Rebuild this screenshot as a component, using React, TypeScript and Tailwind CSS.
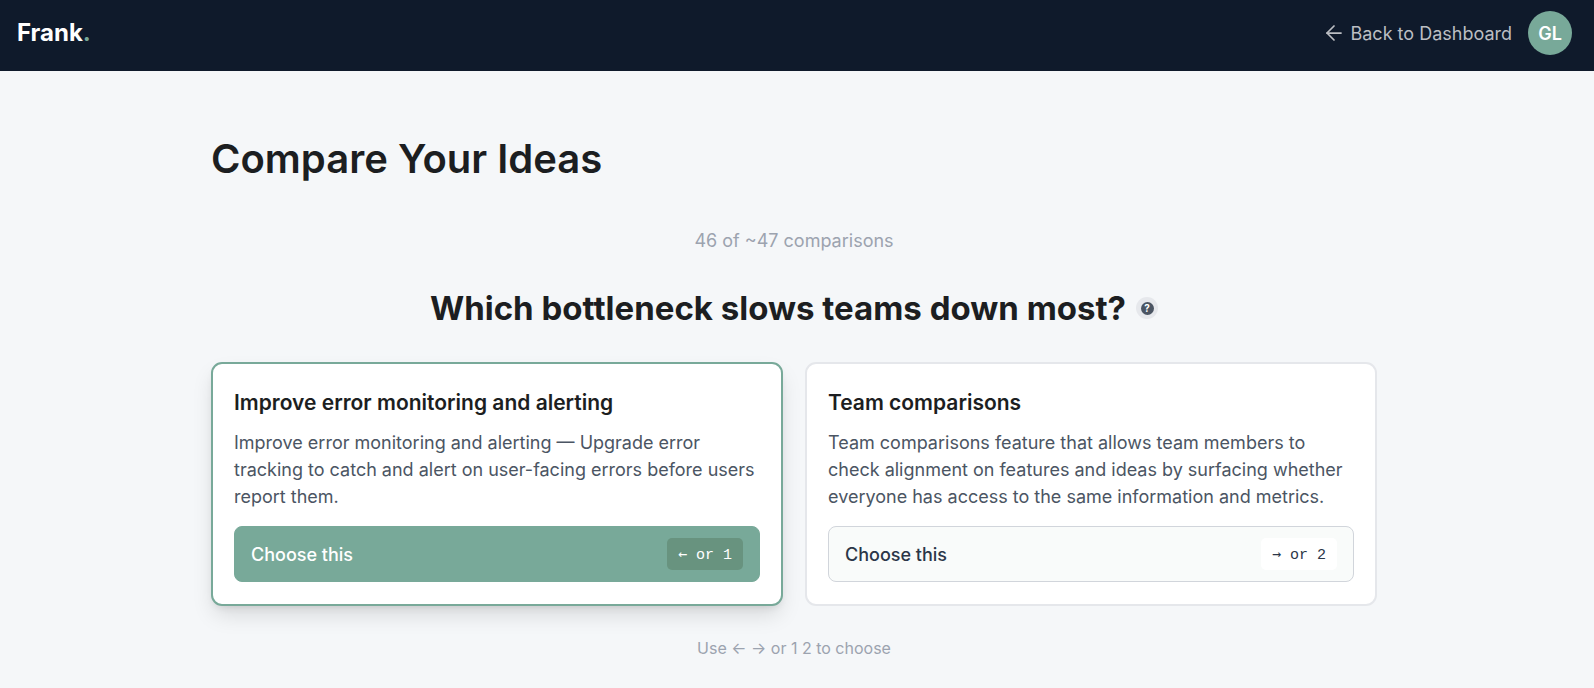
import { useState } from 'react'
import { ArrowLeft } from 'lucide-react'
import clsx from 'clsx'

interface Idea {
  id: number
  title: string
  description: string
  arrow: string
}

const ideas: Idea[] = [
  {
    id: 1,
    title: 'Improve error monitoring and alerting',
    description:
      'Improve error monitoring and alerting — Upgrade error tracking to catch and alert on user-facing errors before users report them.',
    arrow: '←',
  },
  {
    id: 2,
    title: 'Team comparisons',
    description:
      'Team comparisons feature that allows team members to check alignment on features and ideas by surfacing whether everyone has access to the same information and metrics.',
    arrow: '→',
  },
]

function Header() {
  return (
    <header className="bg-[#0f1a2b] pt-[11px] pb-4 pl-[17px] pr-[22px]">
      <div className="flex h-11 items-center justify-between">
        <a href="#" className="text-2xl font-bold text-white">
          Frank<span className="text-[#78a999]">.</span>
        </a>
        <div className="flex items-center gap-4">
          <a href="#" className="flex items-center gap-1 text-[18px] text-[#bcbec3]">
            <ArrowLeft className="h-6 w-6" strokeWidth={1.75} />
            Back to Dashboard
          </a>
          <button
            type="button"
            aria-label="Account"
            className="h-11 w-11 rounded-full bg-[#78a999] text-[18px] font-semibold text-white"
          >
            GL
          </button>
        </div>
      </div>
    </header>
  )
}

function IdeaCard({ idea, selected, onChoose }: { idea: Idea; selected: boolean; onChoose: () => void }) {
  return (
    <article
      className={clsx(
        'flex flex-col rounded-[11px] border-2 bg-white px-[21px] py-[22px]',
        selected
          ? 'border-[#78a999] shadow-[0_11px_22px_-3px_rgba(0,0,0,0.13),0_4px_8px_-4px_rgba(0,0,0,0.13)]'
          : 'border-[#e5e7eb]',
      )}
    >
      <h3 className="text-[21px] leading-[34px] font-semibold text-[#1c1e21]">{idea.title}</h3>
      <p className="mt-[9px] mb-4 text-[18px] leading-[27px] text-[#4b5563]">{idea.description}</p>
      <button
        type="button"
        onClick={onChoose}
        className={clsx(
          'mt-auto flex h-14 w-full items-center justify-between rounded-lg border px-4 text-[18px] font-medium',
          selected
            ? 'border-[#78a999] bg-[#78a999] text-white'
            : 'border-[#d1d5db] bg-[#f9fbfa] text-[#2b3648]',
        )}
      >
        Choose this
        <kbd
          className={clsx(
            'h-8 rounded-[5px] px-[11px] font-["Liberation_Mono",monospace] text-[15px] leading-8 font-normal',
            selected ? 'bg-[#68937f]' : 'bg-white',
          )}
        >
          <span className="font-['DejaVu_Sans_Mono',monospace]">{idea.arrow}</span> or {idea.id}
        </kbd>
      </button>
    </article>
  )
}

export default function App() {
  const [selectedId, setSelectedId] = useState(1)

  return (
    <div className="min-h-screen bg-[#f5f7f9] font-[Inter,sans-serif]">
      <Header />

      <main className="pr-[6px]">
        <div className="mx-auto max-w-[1166px] pt-16 pb-7">
          <h1 className="text-[40px] leading-[48px] font-semibold text-[#1c1e21]">Compare Your Ideas</h1>

          <p className="mt-11 text-center text-[18px] leading-7 text-[#9ca3af]">46 of ~47 comparisons</p>

          <div className="mt-[31px] flex items-center justify-center gap-[10px]">
            <h2 className="text-[33px] leading-[44px] font-bold text-[#1c1e21]">
              Which bottleneck slows teams down most?
            </h2>
            <button
              type="button"
              aria-label="Help"
              className="flex h-[22px] w-[22px] items-center justify-center rounded-full bg-[#e6e8ec]"
            >
              <span className="flex h-[13px] w-[13px] items-center justify-center rounded-full bg-[#4b5563] text-[10px] leading-none font-bold text-white">
                ?
              </span>
            </button>
          </div>

          <div className="mt-8 grid grid-cols-1 gap-[22px] md:grid-cols-2">
            {ideas.map((idea) => (
              <IdeaCard
                key={idea.id}
                idea={idea}
                selected={idea.id === selectedId}
                onChoose={() => setSelectedId(idea.id)}
              />
            ))}
          </div>

          <p className="mt-7 text-center text-[16px] leading-7 text-[#9ca3af]">Use ← → or 1 2 to choose</p>
        </div>
      </main>
    </div>
  )
}
